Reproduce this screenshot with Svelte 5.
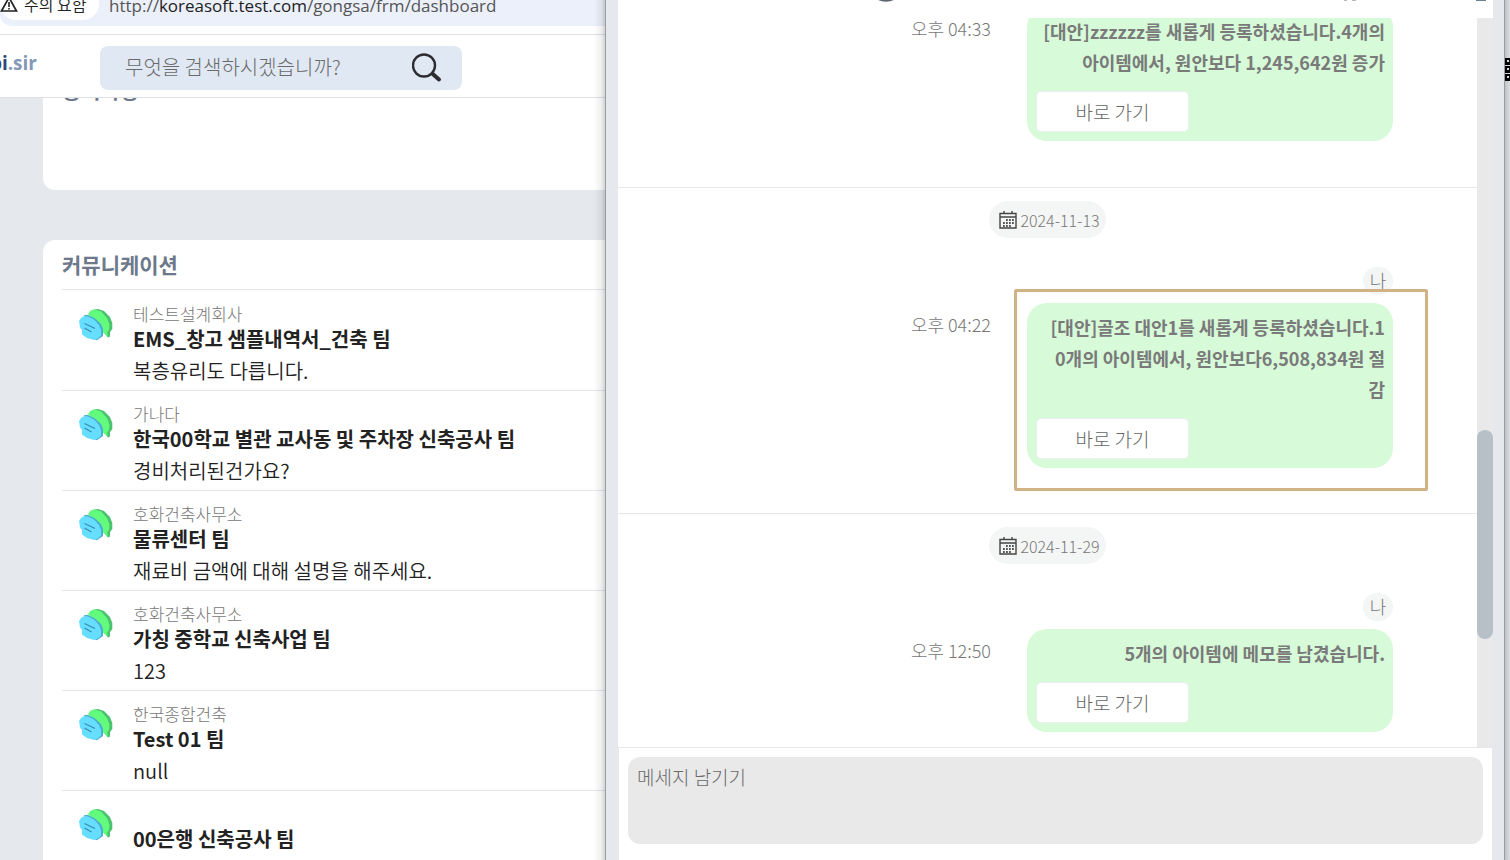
<script>
  const teams = [
    { org: '테스트설계회사', name: 'EMS_창고 샘플내역서_건축 팀', text: '복층유리도 다릅니다.' },
    { org: '가나다', name: '한국00학교 별관 교사동 및 주차장 신축공사 팀', text: '경비처리된건가요?' },
    { org: '호화건축사무소', name: '물류센터 팀', text: '재료비 금액에 대해 설명을 해주세요.' },
    { org: '호화건축사무소', name: '가칭 중학교 신축사업 팀', text: '123' },
    { org: '한국종합건축', name: 'Test 01 팀', text: 'null' },
    { org: '', name: '00은행 신축공사 팀', text: '' }
  ];
  const days = [
    { time: '오후 04:33', text: '[대안]zzzzzz를 새롭게 등록하셨습니다.4개의\n아이템에서, 원안보다 1,245,642원 증가' },
    { date: '2024-11-13', time: '오후 04:22', marked: true, text: '[대안]골조 대안1를 새롭게 등록하셨습니다.1\n0개의 아이템에서, 원안보다6,508,834원 절\n감' },
    { date: '2024-11-29', time: '오후 12:50', text: '5개의 아이템에 메모를 남겼습니다.' }
  ];
</script>

<div class="desktop">
  <section class="browser">
    <div class="address">
      <div class="pill">
        <span class="warn">
          <svg width="18" height="16" viewBox="0 0 18 16"><path d="M9 1.5 16.5 15h-15z" fill="none" stroke="#222" stroke-width="1.7" /><path d="M9 6v5M9 12v1.5" stroke="#222" stroke-width="1.6" /></svg>
          주의 요함
        </span>
        <span class="url">http://<b>koreasoft.test.com</b>/gongsa/frm/dashboard</span>
      </div>
    </div>
    <header class="site">
      <a class="logo" href="#home"><span>bi</span>.sir</a>
      <form class="search">
        <input type="text" aria-label="검색" placeholder="무엇을 검색하시겠습니까?" />
        <button type="button" aria-label="검색">
          <svg width="30" height="30" viewBox="0 0 30 30"><circle cx="12" cy="12.500" r="11" fill="none" stroke="#2d2c31" stroke-width="2.4" /><path d="M20.500 20.800 27 26.500" stroke="#2d2c31" stroke-width="4" stroke-linecap="round" /></svg>
        </button>
      </form>
    </header>
    <main class="board">
      <section class="card notice"><h2>공지사항</h2></section>
      <section class="card">
        <h2>커뮤니케이션</h2>
        <ul>
          {#each teams as team}
            <li>
              <svg class="talk" width="34" height="34" viewBox="0 0 34 34">
                <path d="M15 .5 19 0 25 2 31 8 33.300 14V20L31 23V27.500L29 28.500 26 25 14 9z" fill="#4cc26d" />
                <path d="M9 5 11 2 15 .3 22 2.500 28 9 30.500 16 30 21 28 23.500 29 27 24 24 14 12z" fill="#63fb7e" />
                <path d="M5 6 9 6 16 9.500 22 15 24 20V27L18 31.200 15 30z" fill="#4daed2" />
                <path d="M0 12 2 9 5 7 9 7.500 15 10.500 20 16 22 21V26.500L19 29.500 15 31 8 29 3 25.500V21L1 18.500z" fill="#66deff" />
                <path d="M5.500 14.500 16 19.500M5.500 19 12.500 23" stroke="#398ba9" stroke-width="1.200" />
              </svg>
              <div>
                <p class="org">{team.org}</p>
                <p class="name">{team.name}</p>
                <p class="text">{team.text}</p>
              </div>
            </li>
          {/each}
        </ul>
      </section>
    </main>
  </section>

  <section class="popup">
    <div class="titlebar">
      <svg width="22" height="3" viewBox="0 0 22 3"><path d="M3 0Q11 3.500 19 0z" fill="#5d6670" /></svg>
      <svg class="tool" width="14" height="2" viewBox="0 0 14 2"><path d="M1 0h3v1H1zM9 0h4v1H9z" fill="#b5b9be" /></svg>
      <svg width="14" height="2" viewBox="0 0 14 2"><path d="M1 0h10v1H1z" fill="#6e7f98" /></svg>
    </div>
    <div class="scroller">
      <div class="messages">
        {#each days as day}
          <article>
            {#if day.date}
              <div class="date">
                <svg width="18" height="18" viewBox="0 0 18 18"><path d="M1 2.500h16v14.500H1zM1 6h16M5 0v3M13 0v3" fill="none" stroke="#444" stroke-width="1.4" /><path d="M7 9h8M4 12h11M4 15h8" stroke="#555" stroke-width="1.800" stroke-dasharray="1.800 1.200" /></svg>
                <time>{day.date}</time>
              </div>
              <span class="who">나</span>
            {/if}
            <div class="line">
              <span class="time">{day.time}</span>
              <div class="bubble" class:marked={day.marked}>
                <p>{day.text}</p>
                <button type="button">바로 가기</button>
              </div>
            </div>
          </article>
        {/each}
      </div>
      <div class="track"><div class="thumb"></div></div>
    </div>
    <div class="composer">
      <textarea aria-label="메세지" placeholder="메세지 남기기"></textarea>
    </div>
  </section>

  <aside class="behind">
    <svg width="5" height="24" viewBox="0 0 5 24"><path d="M0 0h5v7H0zM0 8h5v7H0zM0 16h5v7H0z" fill="#000" /><path d="M2 2h2v2H2zM2 10h2v2H2zM2 18h2v2H2z" fill="#ddd" /></svg>
  </aside>
</div>

<style>
  :global(body) { margin: 0; }
  .desktop, .desktop * { box-sizing: border-box; }
  .desktop {
    display: grid;
    grid-template-columns: minmax(0, 606fr) minmax(0, 898fr) 6px;
    grid-template-rows: minmax(0, 1fr);
    height: 100vh;
    overflow: hidden;
    background: #e5e8ed;
    font-family: 'Noto Sans CJK KR', 'Noto Sans', sans-serif;
    font-size: 18px;
    color: #222;
  }
  p, h2, ul { margin: 0; padding: 0; }
  button, input, textarea { font: inherit; border: 0; outline: 0; }
  .browser {
    position: relative;
    display: flex;
    flex-direction: column;
    overflow: hidden;
    white-space: nowrap;
  }
  .browser::after {
    content: '';
    position: absolute;
    inset: 0 0 0 auto;
    width: 12px;
    background: linear-gradient(to right, #0000, #0001 60%, #0003);
  }
  .address { flex: none; height: 35px; background: #fff; border-bottom: 1px solid #dfe1e4; }
  .pill {
    display: flex;
    align-items: flex-end;
    gap: 10px;
    height: 26px;
    background: #ebf0fa;
    border-bottom-left-radius: 12px;
    line-height: 24px;
  }
  .warn {
    display: flex;
    align-items: center;
    gap: 6px;
    width: 99px;
    height: 32px;
    margin-bottom: 6px;
    background: #fff;
    border-radius: 16px;
    font-size: 16px;
    font-weight: 350;
  }
  .url { height: 32px; font-family: 'Open Sans', sans-serif; font-size: 17px; color: #555; }
  .url b { font-weight: 400; color: #222; }
  .site {
    flex: none;
    display: flex;
    align-items: center;
    height: 63px;
    padding-top: 4px;
    background: #fff;
    border-bottom: 1px solid #dfe1e4;
  }
  .logo {
    display: flex;
    justify-content: flex-end;
    width: 37px;
    margin: 0 63px 10px 0;
    font-family: 'Open Sans', sans-serif;
    font-size: 19px;
    font-weight: 700;
    color: #8598b8;
    text-decoration: none;
  }
  .logo span { color: #2c4a78; }
  .search {
    display: flex;
    align-items: center;
    width: 362px;
    height: 44px;
    padding: 0 20px 0 25px;
    border-radius: 8px;
    background: #e0e8f3;
  }
  .search input { flex: 1; min-width: 0; padding: 0 0 3px; background: none; font-size: 20px; font-weight: 300; }
  .search button { display: flex; padding: 0; background: none; }
  ::placeholder { color: #6a6a6a; opacity: 1; }
  .board { flex: 1; min-height: 0; padding-left: 43px; overflow: hidden; }
  .card { padding-left: 19px; border-radius: 12px 0 0 12px; background: #fff; }
  .card h2 { height: 49px; line-height: 49px; font-size: 21px; font-weight: 700; color: #6d788a; }
  .notice { height: 125px; margin: -33px 0 50px; }
  ul { list-style: none; }
  li { display: flex; gap: 20px; height: 100px; padding: 11px 0 0 17px; border-top: 1px solid #e5e7eb; }
  li:first-child { height: 101px; padding-top: 12px; }
  .talk { flex: none; margin-top: 7px; }
  .org { height: 24px; line-height: 24px; font-size: 17px; font-weight: 300; color: #777; }
  .name { height: 26px; line-height: 26px; font-size: 20px; font-weight: 700; }
  .text { line-height: 38px; font-size: 20px; font-weight: 350; }
  .popup {
    display: flex;
    flex-direction: column;
    border: solid #e5e8ed;
    border-width: 0 11px 0 12px;
    outline: 1px solid #999da3;
    z-index: 1;
  }
  .titlebar { flex: none; display: flex; height: 18px; padding: 0 4px 0 257px; background: #fff; }
  .tool { margin: 0 118px 0 auto; }
  .scroller { flex: 1; min-height: 0; display: flex; overflow: hidden; }
  .messages { flex: 1; background: #fff; overflow: hidden; }
  article { display: flex; flex-direction: column; padding: 13px 84px 45px 0; border-bottom: 1px solid #e5e7ea; }
  article:first-child { margin-top: -11px; padding: 0 84px 46px 0; }
  .date {
    display: flex;
    align-items: center;
    align-self: center;
    gap: 3px;
    height: 37px;
    margin: 0 -84px 29px 0;
    padding: 0 6px 0 10px;
    border-radius: 19px;
    background: #f4f6f6;
    color: #777;
    font-size: 16px;
    font-weight: 300;
  }
  .who {
    align-self: flex-end;
    width: 30px;
    height: 28px;
    margin-bottom: 8px;
    border-radius: 14px;
    background: #f4f6f6;
    font-weight: 300;
    line-height: 27px;
    text-align: center;
    color: #777;
  }
  .line { display: flex; justify-content: flex-end; gap: 36px; }
  .time { line-height: 43px; font-weight: 300; color: #777; }
  .bubble {
    position: relative;
    display: flex;
    flex-direction: column;
    gap: 13px;
    width: 366px;
    padding: 9px 8px 9px 9px;
    border-radius: 20px;
    background: #d7fad9;
  }
  .bubble p { line-height: 31px; font-size: 18px; font-weight: 700; text-align: right; white-space: pre; color: #7a7a7a; }
  .bubble button { width: 153px; height: 41px; border: 1px solid #eceff0; border-radius: 5px; background: #fff; font-size: 19px; font-weight: 300; color: #666; }
  .marked::after {
    content: '';
    position: absolute;
    inset: -14px -35px -23px -13px;
    border: 3px solid #d0b285;
    border-radius: 2px;
  }
  .track { width: 16px; padding-top: 412px; background: #e9e9e9; border-bottom-right-radius: 6px; }
  .thumb { height: 209px; border-radius: 8px; background: #b7c0c6; }
  .composer { padding: 9px; border: 1px solid #e5e7ea; border-bottom: 0; background: #fff; }
  textarea {
    display: block;
    width: 100%;
    height: 87px;
    margin-bottom: 7px;
    padding: 6px 9px;
    border-radius: 12px;
    background: #e9e9e9;
    font-size: 19px;
    font-weight: 300;
    resize: none;
  }
  .behind { padding: 58px 0 0 1px; background: linear-gradient(to right, #b9bcc0, #dcdee1); }
  .behind svg { display: block; }
</style>
